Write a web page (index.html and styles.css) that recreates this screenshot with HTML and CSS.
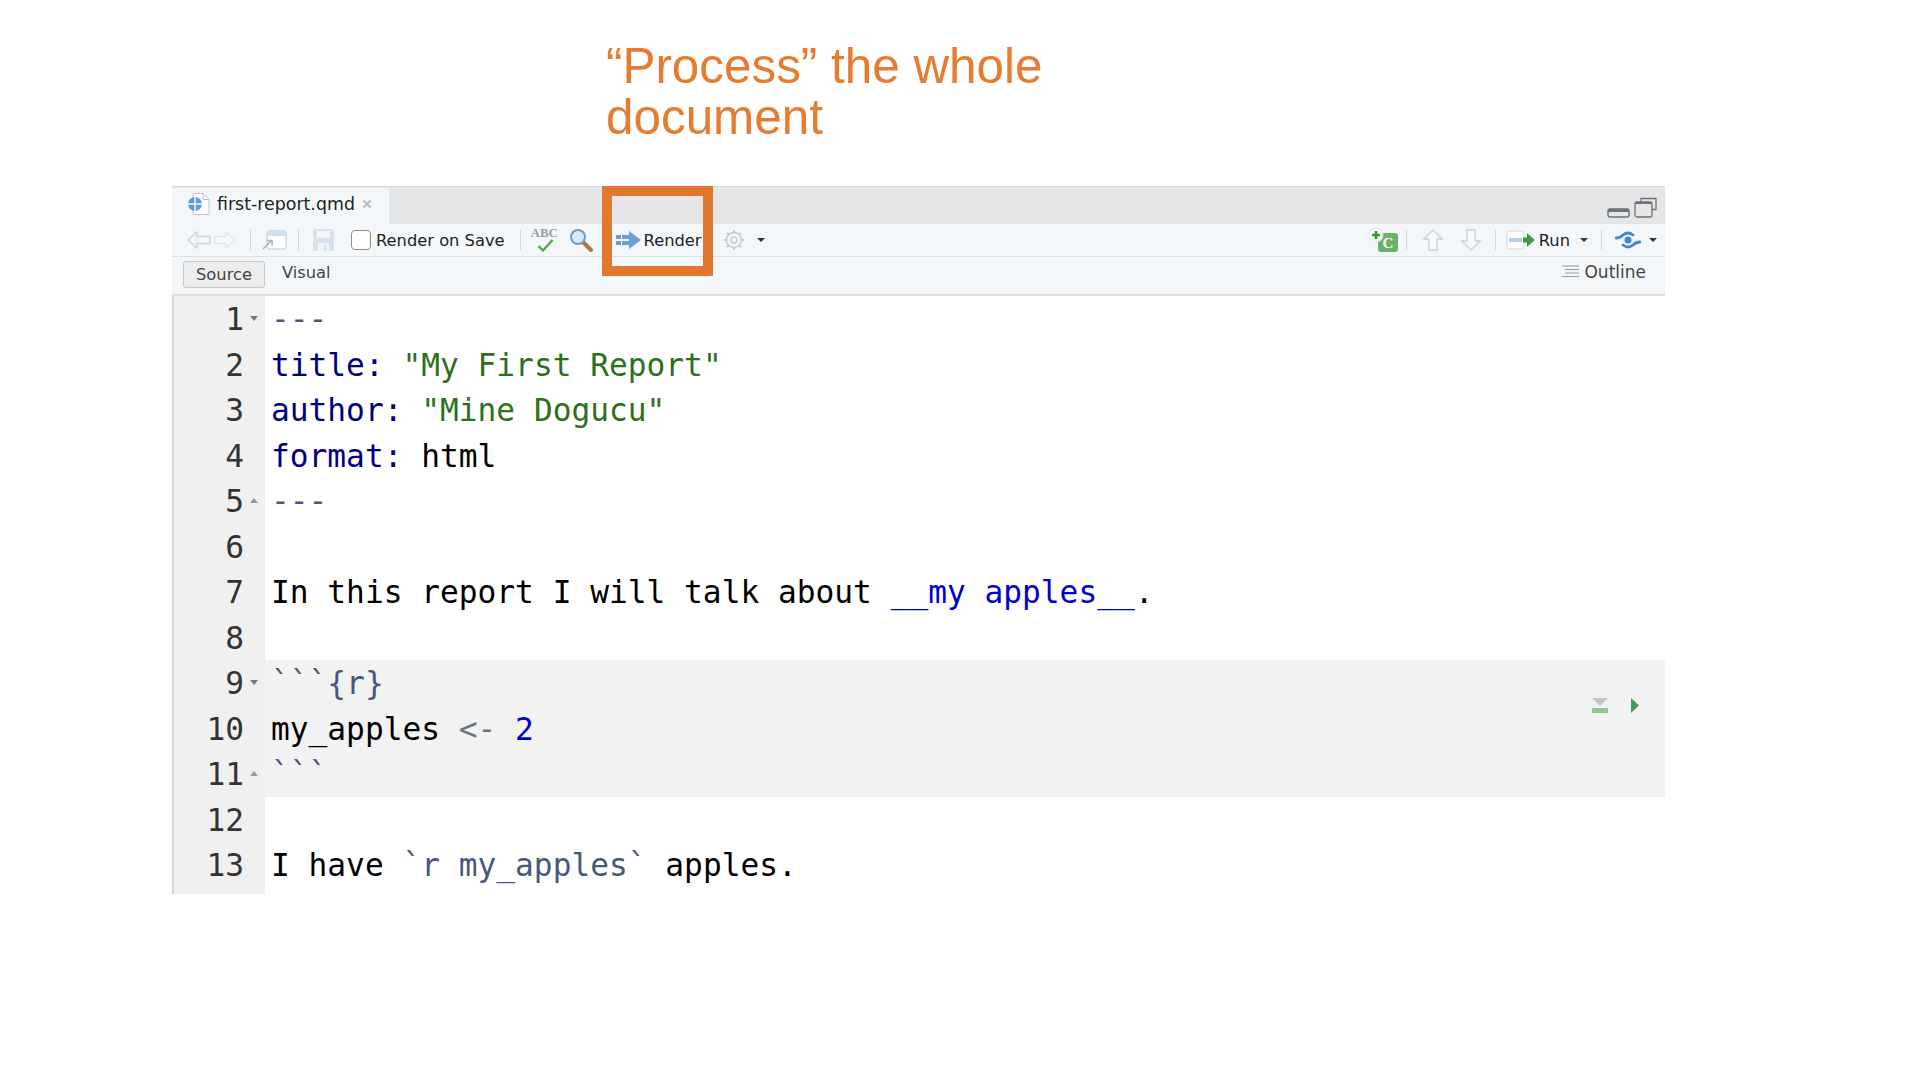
FILE: index.html
```html
<!DOCTYPE html>
<html lang="en">
<head>
<meta charset="utf-8">
<title>first-report.qmd</title>
<link rel="stylesheet" href="styles.css">
</head>
<body>
<h1 class="note">“Process” the whole document</h1>
<section class="panel">
  <div class="tabbar">
    <div class="tab">
      <svg class="tab-icon" width="24" height="24" viewBox="0 0 24 24"><path d="M6 1.500h10l6 6v15H6z" fill="#fff" stroke="#bfc4c9"/><path d="M16 1.500v6h6" fill="none" stroke="#bfc4c9"/><circle cx="8" cy="12" r="7" fill="#5f9bd8"/><path d="M1 12h14M8 5v14" stroke="#fff" stroke-width="1.400"/></svg>
      <span class="tab-name">first-report.qmd</span>
      <svg class="tab-close" width="10" height="10" viewBox="0 0 10 10"><path d="M1.500 1.500l7 7M8.500 1.500l-7 7" stroke="#b9bdc1" stroke-width="2.200"/></svg>
    </div>
    <div class="winctl">
      <svg width="23" height="10" viewBox="0 0 23 10"><rect x="1" y="1" width="21" height="8" rx="2" fill="#e4e6e7" stroke="#6e7276" stroke-width="1.400"/><rect x="1" y="1" width="21" height="3" fill="#6e7276"/></svg>
      <svg width="23" height="21" viewBox="0 0 23 21"><path d="M7 5V1.500h15v11h-4" fill="none" stroke="#6e7276" stroke-width="1.300"/><rect x="1" y="5" width="17" height="15" rx="2" fill="#e4e6e7" stroke="#6e7276" stroke-width="1.300"/><path d="M1 6h17" stroke="#6e7276" stroke-width="2"/></svg>
    </div>
  </div>

  <div class="toolbar">
    <svg class="i-back" width="24" height="20" viewBox="0 0 24 20"><path d="M1 10l9-8v4.500h13v7H10V18z" fill="#f4f6f7" stroke="#cfd2d5" stroke-width="1.300"/></svg>
    <svg class="i-fwd" width="22" height="20" viewBox="0 0 22 20"><path d="M21 10l-9-8v4.500H1v7h11V18z" fill="#f8f9fa" stroke="#e3e5e7" stroke-width="1.300"/></svg>
    <span class="sep s1"></span>
    <svg class="i-new" width="25" height="20" viewBox="0 0 25 20"><rect x="5" y="1" width="19" height="18" rx="2" fill="#fff" stroke="#bcc3ca"/><rect x="5" y="1" width="19" height="5" rx="2" fill="#cfe0ef"/><path d="M1 19l8-8M5 10.500h5v5" fill="none" stroke="#aab1b8" stroke-width="1.600"/></svg>
    <span class="sep s2"></span>
    <svg class="i-save" width="21" height="22" viewBox="0 0 21 22"><path d="M0 2q0-2 2-2h17q2 0 2 2v20H0z" fill="#d6e3ef"/><rect x="4" y="2" width="13" height="7" fill="#f1f5f8"/><rect x="5" y="14" width="11" height="8" fill="#f1f5f8"/><rect x="11" y="16" width="3" height="6" fill="#d6e3ef"/></svg>
    <label class="check"><span class="box"></span>Render on Save</label>
    <span class="sep s3"></span>
    <span class="abc"><span class="abc-t">ABC</span><svg class="abc-c" width="17" height="13" viewBox="0 0 17 13"><path d="M1.500 7l4.500 4.500L15.500 1" fill="none" stroke="#4ea24a" stroke-width="2.200"/></svg></span>
    <svg class="i-find" width="24" height="24" viewBox="0 0 24 24"><path d="M14 14l8 8" stroke="#a9764a" stroke-width="4" stroke-linecap="round"/><circle cx="9" cy="9" r="7" fill="#dbeaf6" stroke="#6f9cc2" stroke-width="2"/></svg>
    <span class="render">
      <svg width="25" height="18" viewBox="0 0 25 18"><path d="M13 0l12 9-12 9z" fill="#6a9fdc"/><rect x="0" y="4" width="5" height="4" fill="#6a9fdc"/><rect x="0" y="10" width="5" height="4" fill="#6a9fdc"/><rect x="6" y="4" width="7" height="4" fill="#6a9fdc"/><rect x="6" y="10" width="7" height="4" fill="#6a9fdc"/></svg>
      <span class="render-t">Render</span>
      <span class="mark"></span>
    </span>
    <svg class="i-gear" width="22" height="22" viewBox="0 0 22 22"><circle cx="11" cy="11" r="3" fill="none" stroke="#c5c9cd" stroke-width="1.400"/><circle cx="11" cy="11" r="7.500" fill="none" stroke="#c5c9cd" stroke-width="1.400"/><path d="M11 1v3M11 18v3M1 11h3M18 11h3M4 4l2 2M16 16l2 2M18 4l-2 2M6 16l-2 2" stroke="#c5c9cd" stroke-width="2.200"/></svg>
    <span class="caret c1"></span>

    <svg class="i-chunk" width="29" height="24" viewBox="0 0 29 24"><rect x="9" y="5" width="20" height="19" rx="3" fill="#6bb168"/><text x="19" y="20" class="chunk-c">C</text><circle cx="7" cy="7" r="7" fill="#fff" stroke="#e3e6e8"/><path d="M7 3v8M3 7h8" stroke="#2f9b2c" stroke-width="2.600"/></svg>
    <span class="sep s4"></span>
    <svg class="i-up" width="20" height="22" viewBox="0 0 20 22"><path d="M10 1l9 9h-5v11H6V10H1z" fill="#fafbfc" stroke="#cdd0d3" stroke-width="1.300"/></svg>
    <svg class="i-down" width="20" height="22" viewBox="0 0 20 22"><path d="M10 21l9-9h-5V1H6v11H1z" fill="#fafbfc" stroke="#cdd0d3" stroke-width="1.300"/></svg>
    <span class="sep s5"></span>
    <svg class="i-run" width="30" height="20" viewBox="0 0 30 20"><rect x="1" y="1" width="17" height="18" rx="2" fill="#fff" stroke="#d3d7da"/><rect x="3" y="8" width="13" height="4" fill="#b5cdec"/><path d="M17 7.500h4V3l8 7-8 7v-4.500h-4z" fill="#3d9a48"/></svg>
    <span class="run-t">Run</span>
    <span class="caret c2"></span>
    <span class="sep s6"></span>
    <svg class="i-pub" width="26" height="20" viewBox="0 0 26 20"><circle cx="13" cy="10" r="3.500" fill="#3e86d2"/><path d="M1 8Q5 8 8 5Q13 1 18 5M25 12Q21 12 18 15Q13 19 8 15" fill="none" stroke="#3e86d2" stroke-width="2.800" stroke-linecap="round"/></svg>
    <span class="caret c3"></span>
  </div>

  <div class="modebar">
    <button class="mode on">Source</button>
    <span class="mode-v">Visual</span>
    <span class="outline">
      <svg width="17" height="14" viewBox="0 0 17 14"><path d="M0 1h17M3 4.500h14M3 8h14M0 11.500h17" stroke="#9a9ea2" stroke-width="1.200"/></svg>
      Outline
    </span>
  </div>

  <div class="editor">
    <div class="row"><div class="gut"><span class="n">1</span><i class="fold dn"></i></div><div class="code"><span class="dim">---</span></div></div>
    <div class="row"><div class="gut"><span class="n">2</span><i class="fold"></i></div><div class="code"><span class="key">title:</span> <span class="str">"My First Report"</span></div></div>
    <div class="row"><div class="gut"><span class="n">3</span><i class="fold"></i></div><div class="code"><span class="key">author:</span> <span class="str">"Mine Dogucu"</span></div></div>
    <div class="row"><div class="gut"><span class="n">4</span><i class="fold"></i></div><div class="code"><span class="key">format:</span> html</div></div>
    <div class="row"><div class="gut"><span class="n">5</span><i class="fold up"></i></div><div class="code"><span class="dim">---</span></div></div>
    <div class="row"><div class="gut"><span class="n">6</span><i class="fold"></i></div><div class="code"></div></div>
    <div class="row"><div class="gut"><span class="n">7</span><i class="fold"></i></div><div class="code">In this report I will talk about <span class="blue">__my apples__</span>.</div></div>
    <div class="row"><div class="gut"><span class="n">8</span><i class="fold"></i></div><div class="code"></div></div>
    <div class="row"><div class="gut"><span class="n">9</span><i class="fold dn"></i></div><div class="code chunk"><span class="dim">```{r}</span></div></div>
    <div class="row"><div class="gut"><span class="n">10</span><i class="fold"></i></div><div class="code chunk">my_apples <span class="op">&lt;-</span> <span class="blue">2</span>
      <span class="chunk-tools">
        <svg width="16" height="15" viewBox="0 0 16 15"><path d="M0 0h16L8 8z" fill="#c4c6c6"/><rect y="10" width="16" height="5" fill="#8cc896"/></svg>
        <svg width="8" height="15" viewBox="0 0 8 15"><path d="M0 0l8 7.500L0 15z" fill="#3e9e55"/></svg>
      </span>
    </div></div>
    <div class="row"><div class="gut"><span class="n">11</span><i class="fold up"></i></div><div class="code chunk"><span class="dim">```</span></div></div>
    <div class="row"><div class="gut"><span class="n">12</span><i class="fold"></i></div><div class="code"></div></div>
    <div class="row"><div class="gut"><span class="n">13</span><i class="fold"></i></div><div class="code">I have <span class="dim">`r my_apples`</span> apples.</div></div>
    <div class="row tail"><div class="gut"></div><div class="code"></div></div>
  </div>
</section>
</body>
</html>
```

FILE: styles.css
```css
* { box-sizing: border-box; }
html, body { margin: 0; padding: 0; background: #fff; }
body { height: 1080px; overflow: hidden; font-family: "DejaVu Sans", sans-serif; }

.note {
  margin: 0 0 0 606px;
  padding-top: 40px;
  width: 490px;
  height: 186px;
  font: 400 49.400px/51px "Liberation Sans", Arial, sans-serif;
  color: #e57c30;
}

.panel { margin-left: 172px; width: 1493px; position: relative; }

.tabbar {
  height: 37px;
  background: #e4e6e7;
  border-top: 1px solid #d5d7d9;
  display: flex;
  justify-content: space-between;
}
.tab {
  width: 217px;
  height: 37px;
  margin-top: 1px;
  background: #f4f7f9;
  border-radius: 3px 3px 0 0;
  display: flex;
  align-items: center;
  padding: 0 0 5px 15px;
}
.tab-name { margin-left: 6px; font-size: 17.400px; color: #222; white-space: nowrap; }
.tab-close { margin-left: 7px; }
.winctl { display: flex; align-items: flex-end; gap: 4px; padding: 0 8px 5px 0; }

.toolbar {
  height: 34px;
  background: #f4f7f9;
  border-top: 1px solid #dfe2e4;
  border-bottom: 1px solid #dfe2e4;
  display: flex;
  align-items: center;
  font-size: 16.300px;
  color: #222;
  white-space: nowrap;
}
.sep { width: 1px; height: 20px; background: #d6d9db; flex: none; }
.i-back { margin-left: 15px; }
.i-fwd { margin-left: 3px; }
.s1 { margin-left: 14px; }
.i-new { margin-left: 11px; }
.s2 { margin-left: 11px; }
.i-save { margin-left: 14px; }
.check { margin-left: 17px; display: flex; align-items: center; }
.box { width: 20px; height: 20px; border: 1.500px solid #8b8f93; border-radius: 4px; background: #fff; margin-right: 5px; }
.s3 { margin-left: 15px; }
.abc { margin-left: 10px; width: 28px; height: 28px; position: relative; display: block; }
.abc-t { position: absolute; left: 0; top: 0; font: 700 13px/13px "Liberation Serif", serif; color: #9a9fa3; }
.abc-c { position: absolute; left: 6px; top: 13px; }
.i-find { margin-left: 10px; }
.render { margin-left: 23px; display: flex; align-items: center; position: relative; }
.render-t { margin-left: 3px; }
.mark {
  position: absolute;
  left: -14px;
  top: -45px;
  width: 111px;
  height: 90px;
  border: 10px solid #e2772f;
}
.i-gear { margin-left: 21px; }
.caret { width: 0; height: 0; border-left: 4px solid transparent; border-right: 4px solid transparent; border-top: 4px solid #333; flex: none; }
.c1 { margin-left: 12px; }
.i-chunk { margin-left: auto; }
.s4 { margin-left: 8px; }
.i-up { margin-left: 16px; }
.i-down { margin-left: 18px; }
.s5 { margin-left: 14px; }
.i-run { margin-left: 10px; }
.run-t { margin-left: 3px; }
.c2 { margin-left: 10px; }
.s6 { margin-left: 13px; }
.i-pub { margin-left: 13px; }
.c3 { margin: 0 8px 0 8px; }

.modebar {
  height: 39px;
  background: #f4f7f9;
  border-bottom: 2px solid #dcdfe1;
  display: flex;
  align-items: flex-start;
  font-size: 16.300px;
  color: #444;
  padding-left: 11px;
}
.mode {
  margin-top: 4px;
  width: 82px;
  height: 27px;
  padding: 0;
  font: inherit;
  color: #444;
  background: #ededed;
  border: 1px solid #c6c9cb;
  border-radius: 3px;
}
.mode-v { margin: 6px 0 0 17px; }
.outline { margin: 5px 19px 0 auto; display: flex; align-items: center; gap: 5px; font-size: 17px; }

.editor { border-left: 2px solid #d6d9de; font: 31.200px/45.500px "DejaVu Sans Mono", monospace; color: #000; }
.row { display: flex; height: 45.500px; }
.row.tail { height: 6.500px; }
.gut {
  width: 91px;
  flex: none;
  background: #f0f0f0;
  display: flex;
  color: #333;
  padding-top: 1px;
}
.n { width: 70px; text-align: right; }
.fold { width: 8px; margin-left: 6px; height: 5px; margin-top: 19px; flex: none; }
.fold.dn { border-left: 4px solid transparent; border-right: 4px solid transparent; border-top: 5px solid #777; }
.fold.up { border-left: 4px solid transparent; border-right: 4px solid transparent; border-bottom: 5px solid #999; }
.code { flex: 1; padding: 1px 0 0 6px; white-space: pre; position: relative; }
.chunk { background: #f2f2f2; }
.chunk-tools { position: absolute; right: 26px; top: -23px; display: flex; gap: 23px; align-items: center; height: 45px; }
.key { color: #00007f; }
.str { color: #2e6f1c; }
.dim { color: #47587c; }
.blue { color: #0000cd; }
.op { color: #69747e; }
.chunk-c { font: 700 15px "Liberation Serif", serif; fill: #fff; text-anchor: middle; }
```
